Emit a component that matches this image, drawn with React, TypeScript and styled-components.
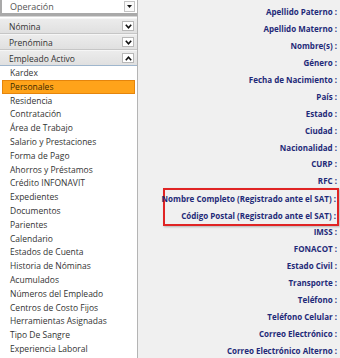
import styled, { createGlobalStyle } from "styled-components";

const GlobalStyle = createGlobalStyle`
  html, body {
    margin: 0;
    padding: 0;
    background: #f0f0f0;
  }
  body {
    font-family: "Open Sans", "Noto Sans", sans-serif;
  }
`;

const sections = ["Nómina", "Prenómina"];

const menuItems = [
  "Kardex",
  "Personales",
  "Residencia",
  "Contratación",
  "Área de Trabajo",
  "Salario y Prestaciones",
  "Forma de Pago",
  "Ahorros y Préstamos",
  "Crédito INFONAVIT",
  "Expedientes",
  "Documentos",
  "Parientes",
  "Calendario",
  "Estados de Cuenta",
  "Historia de Nóminas",
  "Acumulados",
  "Números del Empleado",
  "Centros de Costo Fijos",
  "Herramientas Asignadas",
  "Tipo De Sangre",
  "Experiencia Laboral",
];

const fieldsBefore = [
  "Apellido Paterno",
  "Apellido Materno",
  "Nombre(s)",
  "Género",
  "Fecha de Nacimiento",
  "País",
  "Estado",
  "Ciudad",
  "Nacionalidad",
  "CURP",
  "RFC",
];

const satFields = [
  "Nombre Completo (Registrado ante el SAT)",
  "Código Postal (Registrado ante el SAT)",
];

const fieldsAfter = [
  "IMSS",
  "FONACOT",
  "Estado Civil",
  "Transporte",
  "Teléfono",
  "Teléfono Celular",
  "Correo Electrónico",
  "Correo Electrónico Alterno",
];

const Chevron = ({ up }: { up?: boolean }) => (
  <svg width="7" height="5" viewBox="0 0 7 5">
    <path
      d={up ? "M0.8 4.2 L3.5 1.2 L6.2 4.2" : "M0.8 0.8 L3.5 3.8 L6.2 0.8"}
      fill="none"
      stroke="#111"
      strokeWidth="1.6"
    />
  </svg>
);

export default function App() {
  return (
    <>
      <GlobalStyle />
      <Page>
        <Sidebar>
          <SelectFrame>
            <SelectText>Operación</SelectText>
            <DropButton>
              <svg width="5" height="3" viewBox="0 0 5 3">
                <path d="M0 0 L5 0 L2.5 3 Z" fill="#111" />
              </svg>
            </DropButton>
          </SelectFrame>
          {sections.map((s) => (
            <SectionHeader key={s}>
              <span>{s}</span>
              <ChevronButton>
                <Chevron />
              </ChevronButton>
            </SectionHeader>
          ))}
          <SectionHeader $open>
            <span>Empleado Activo</span>
            <ChevronButton>
              <Chevron up />
            </ChevronButton>
          </SectionHeader>
          <MenuList>
            {menuItems.map((m) => (
              <MenuItem key={m} $active={m === "Personales"}>
                {m}
              </MenuItem>
            ))}
          </MenuList>
        </Sidebar>
        <Content>
          <TopEdge />
          <Fields>
            {fieldsBefore.map((f) => (
              <FieldLabel key={f}>{f} :</FieldLabel>
            ))}
            <SatBox>
              {satFields.map((f) => (
                <FieldLabel key={f}>{f} :</FieldLabel>
              ))}
            </SatBox>
            {fieldsAfter.map((f) => (
              <FieldLabel key={f}>{f} :</FieldLabel>
            ))}
          </Fields>
        </Content>
      </Page>
    </>
  );
}

const Page = styled.div`
  display: flex;
  width: 340px;
  height: 358px;
  overflow: hidden;
  background: #f0f0f0;
`;

const Sidebar = styled.div`
  width: 137px;
  flex-shrink: 0;
  display: flex;
  flex-direction: column;
  background: #ffffff;
  border-right: 1px solid #b4b4b4;
`;

const SelectFrame = styled.div`
  height: 13px;
  display: flex;
  align-items: center;
  justify-content: space-between;
  background: #ffffff;
  border-left: 2px solid #a9a9a9;
  border-bottom: 3px solid #a9a9a9;
  padding-left: 8px;
  padding-right: 2px;
  margin-bottom: 2px;
  box-shadow: 0 1px 0 #d6d6d6;
`;

const SelectText = styled.span`
  font-size: 9px;
  color: #555555;
`;

const DropButton = styled.div`
  width: 11px;
  height: 11px;
  display: flex;
  align-items: center;
  justify-content: center;
  background: #fafafa;
  border: 1px solid #c4c4c4;
  box-sizing: border-box;
`;

const SectionHeader = styled.div<{ $open?: boolean }>`
  height: 16px;
  box-sizing: border-box;
  display: flex;
  align-items: center;
  justify-content: space-between;
  padding: 0 3px 0 9px;
  background: linear-gradient(#ececec, #e0e0e0);
  border-top: 1px solid #f6f6f6;
  border-bottom: 1px solid ${({ $open }) => ($open ? "#9fb6cd" : "#c6c6c6")};
  font-size: 8.5px;
  color: #333333;
`;

const ChevronButton = styled.div`
  width: 12px;
  height: 10px;
  box-sizing: border-box;
  display: flex;
  align-items: center;
  justify-content: center;
  background: #ffffff;
  border: 1px solid #b8b8b8;
`;

const MenuList = styled.div`
  display: flex;
  flex-direction: column;
  padding: 0 2px;
`;

const MenuItem = styled.div<{ $active?: boolean }>`
  height: 13.8px;
  line-height: 12.5px;
  box-sizing: border-box;
  padding-left: 7px;
  font-size: 8.5px;
  white-space: nowrap;
  color: ${({ $active }) => ($active ? "#3a2a00" : "#333333")};
  background: ${({ $active }) => ($active ? "#ffa31a" : "transparent")};
  border: 1px solid ${({ $active }) => ($active ? "#e5850c" : "transparent")};
`;

const Content = styled.div`
  flex: 1;
  min-width: 0;
  display: flex;
  flex-direction: column;
  background: #f0f0f0;
`;

const TopEdge = styled.div`
  width: 30px;
  height: 2px;
  margin-left: 24px;
  background: #3a3a3a;
`;

const Fields = styled.div`
  display: flex;
  flex-direction: column;
  align-items: flex-end;
  padding: 3px 3px 0 0;
`;

const FieldLabel = styled.div`
  height: 16.95px;
  line-height: 17px;
  font-size: 8px;
  font-weight: 700;
  white-space: nowrap;
  color: #1f2a78;
`;

const SatBox = styled.div`
  display: flex;
  flex-direction: column;
  align-items: flex-end;
  align-self: stretch;
  margin: -1px -2px -3px 25px;
  padding: 0 1px 0 0;
  border: 2px solid #e02424;
  box-shadow: 1px 1px 2px rgba(0, 0, 0, 0.25);
`;
